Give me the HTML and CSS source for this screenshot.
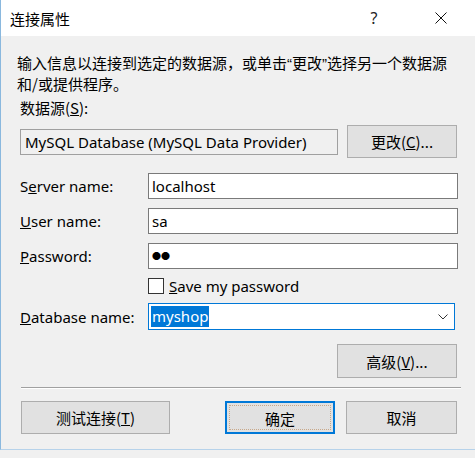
FILE: index.html
```html
<!DOCTYPE html>
<html lang="zh-CN">
<head>
    <meta charset="UTF-8">
    <title>连接属性</title>
    <link rel="stylesheet" href="styles.css">
</head>
<body>
    <div class="dialog">
        <div class="titlebar">
            <span class="title">连接属性</span>
            <span class="help">?</span>
            <span class="close">
                <svg width="12" height="12" viewBox="0 0 12 12">
                    <path d="M0.5 0.5 L11.5 11.5 M11.5 0.5 L0.5 11.5" stroke="#111" stroke-width="1" fill="none"/>
                </svg>
            </span>
        </div>

        <div class="content">
            <p class="desc">输入信息以连接到选定的数据源，或单击<span class="q">“</span>更改<span class="q">”</span>选择另一个数据源<br>和/或提供程序。</p>
            <div class="source-label">数据源(<u>S</u>):</div>
            <div class="source-row">
                <div class="source-box">MySQL Database (MySQL Data Provider)</div>
                <button class="btn btn-change">更改(<u>C</u>)...</button>
            </div>

            <!-- connection fields -->
            <div class="form">
                <label class="lbl">S<u>e</u>rver name:</label>
                <div class="field">localhost</div>

                <label class="lbl"><u>U</u>ser name:</label>
                <div class="field">sa</div>

                <label class="lbl"><u>P</u>assword:</label>
                <div class="field dots">●●</div>

                <span></span>
                <div class="check-row">
                    <span class="checkbox"></span>
                    <span class="en"><u>S</u>ave my password</span>
                </div>

                <label class="lbl"><u>D</u>atabase name:</label>
                <div class="combo">
                    <span class="selected">myshop</span>
                    <svg class="chevron" width="10" height="6" viewBox="0 0 10 6">
                        <path d="M0.5 0.5 L5 5 L9.5 0.5" stroke="#333" stroke-width="1" fill="none"/>
                    </svg>
                </div>
            </div>

            <div class="adv-row">
                <button class="btn btn-adv">高级(<u>V</u>)...</button>
            </div>

            <hr class="sep">

            <div class="bottom-row">
                <button class="btn btn-test">测试连接(<u>T</u>)</button>
                <span class="spacer"></span>
                <button class="btn btn-ok"><span class="focus">确定</span></button>
                <button class="btn btn-cancel">取消</button>
            </div>
        </div>
    </div>
</body>
</html>
```

FILE: styles.css
```css
/* Global styles */
body {
    margin: 0;
    font-family: "Noto Sans", "Noto Sans CJK SC", sans-serif;
    font-size: 15px;
    color: #000;
    background: #f0f0f0;
}

.dialog {
    width: 474px;
    height: 449px;
    background: #f0f0f0;
    border-left: 1px solid #8ab8de;
    border-bottom: 1px solid #b6d2ea;
    overflow: hidden;
}

/* Title bar */
.titlebar {
    height: 36px;
    background: #fff;
    display: flex;
    align-items: center;
    font-family: "Noto Sans CJK SC", sans-serif;
}

.title {
    margin-left: 9px;
    font-size: 15px;
    flex: 1;
}

.help {
    font-family: "Noto Sans", sans-serif;
    font-size: 16px;
    color: #222;
    width: 20px;
    margin-right: 45px;
    text-align: center;
}

.close {
    width: 24px;
    margin-right: 22px;
    display: flex;
    justify-content: center;
}

/* Content */
.content {
    padding: 0 14px 0 16px;
}

.desc {
    margin: 16px 0 0;
    font-family: "Noto Sans CJK SC", sans-serif;
    font-size: 15px;
    line-height: 21px;
    white-space: nowrap;
}

.desc .q {
    font-family: "Liberation Sans", sans-serif;
    line-height: 1;
}

.source-label {
    margin: 4px 0 0 3px;
    line-height: 20px;
    font-family: "Noto Sans CJK SC", sans-serif;
}

.source-row {
    margin: 7px 4px 0 3px;
    display: flex;
    align-items: center;
    justify-content: space-between;
}

.source-box {
    width: 312px;
    height: 24px;
    line-height: 24px;
    padding-left: 4px;
    border: 1px solid #a0a0a0;
    background: #f0f0f0;
    white-space: nowrap;
    font-size: 15px;
}

.btn {
    font-family: "Noto Sans CJK SC", sans-serif;
    font-size: 15px;
    background: #e1e1e1;
    border: 1px solid #adadad;
    color: #000;
    padding: 0;
    height: 34px;
    box-sizing: border-box;
}

.btn-change {
    width: 110px;
    height: 33px;
}

/* Form grid */
.form {
    margin: 15px 0 0 3px;
    display: grid;
    grid-template-columns: 128px 310px;
    row-gap: 9px;
    align-items: center;
}

.lbl {
    font-size: 15px;
}

.field {
    height: 24px;
    line-height: 24px;
    border: 1px solid #7a7a7a;
    background: #fff;
    padding-left: 3px;
}

.dots {
    font-size: 9px;
}

.check-row {
    display: flex;
    align-items: center;
    height: 16px;
}

.checkbox {
    width: 14px;
    height: 14px;
    border: 1px solid #333;
    background: #fff;
    margin-right: 5px;
}

.combo {
    width: 305px;
    height: 25px;
    border: 1px solid #0078d7;
    background: #fff;
    display: flex;
    align-items: center;
    justify-content: space-between;
}

.selected {
    background: #0078d7;
    color: #fff;
    line-height: 21px;
    margin-left: 2px;
    padding: 0 1px;
}

.chevron {
    margin-right: 6px;
}

.adv-row {
    margin: 14px 4px 0 0;
    display: flex;
    justify-content: flex-end;
}

.btn-adv {
    width: 120px;
}

.sep {
    margin: 9px 0 0 4px;
    border: none;
    border-top: 1px solid #a0a0a0;
    border-bottom: 1px solid #fff;
}

.bottom-row {
    margin: 12px 4px 0 4px;
    display: flex;
}

.btn-test {
    width: 149px;
    height: 33px;
}

.spacer {
    flex: 1;
}

.btn-ok {
    width: 110px;
    height: 33px;
    border: 2px solid #0078d7;
    margin-right: 11px;
    padding: 2px;
}

.btn-ok .focus {
    display: block;
    height: 100%;
    line-height: 25px;
    border: 1px dotted #c8a88a;
    box-sizing: border-box;
}

.btn-cancel {
    width: 111px;
    height: 33px;
}
```
